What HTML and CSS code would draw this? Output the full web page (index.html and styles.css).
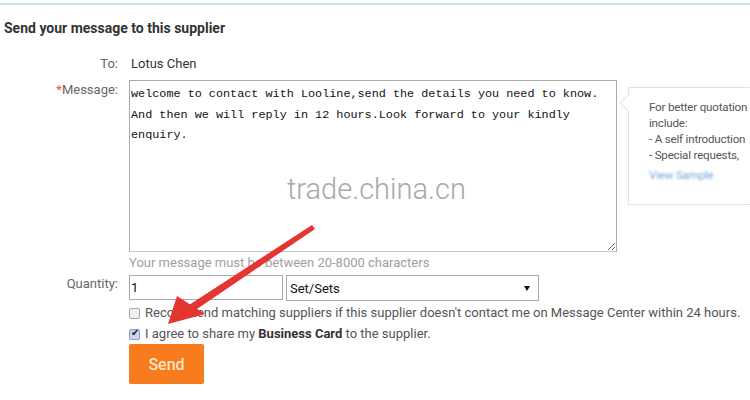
FILE: index.html
```html
<!DOCTYPE html>
<html lang="en">
<head>
    <meta charset="UTF-8">
    <title>Send your message to this supplier</title>
    <link rel="stylesheet" href="styles.css">
</head>
<body>
    <div class="top-line"></div>
    <h2 class="title">Send your message to this supplier</h2>

    <div class="form">
        <div class="row to-row">
            <div class="label">To:</div>
            <div class="field">Lotus Chen</div>
        </div>

        <div class="row msg-row">
            <div class="label"><span class="req">*</span>Message:</div>
            <div class="field">
                <div class="msg-wrap">
                    <textarea class="message" readonly>welcome to contact with Looline,send the details you need to know. And then we will reply in 12 hours.Look forward to your kindly enquiry.</textarea>
                    <div class="tip">
                        <p>For better quotation</p>
                        <p>include:</p>
                        <p>- A self introduction</p>
                        <p>- Special requests,</p>
                        <a class="sample">View Sample</a>
                    </div>
                </div>
                <div class="hint">Your message must be between 20-8000 characters</div>
            </div>
        </div>

        <div class="row qty-row">
            <div class="label">Quantity:</div>
            <div class="field">
                <div class="qty">
                    <input class="qty-input" type="text" value="1">
                    <div class="unit">Set/Sets<span class="caret"></span></div>
                </div>
                <label class="check"><input type="checkbox"><span>Recommend matching suppliers if this supplier doesn't contact me on Message Center within 24 hours.</span></label>
                <label class="check"><input type="checkbox" checked><span>I agree to share my <b>Business Card</b> to the supplier.</span></label>
                <button class="send">Send</button>
            </div>
        </div>
    </div>

    <!-- screenshot overlays: watermark and red arrow -->
    <div class="watermark">trade.china.cn</div>
    <svg class="arrow" width="750" height="400" viewBox="0 0 750 400">
        <polygon points="312,225 315,229 194,311 189,305" fill="#e53530"/>
        <polygon points="168,324 177,296 205,314" fill="#e53530"/>
    </svg>
</body>
</html>
```

FILE: styles.css
```css
body {
    margin: 0;
    background: #fff;
    font-family: Roboto, "Liberation Sans", sans-serif;
    font-size: 13px;
    color: #555;
    overflow: hidden;
    width: 750px;
    height: 400px;
    position: relative;
}
.top-line {
    margin-top: 3px;
    height: 2px;
    background: #cfe2ea;
}
.title {
    margin: 13px 0 0 4px;
    font-size: 14px;
    line-height: 20px;
    font-weight: 700;
    color: #333;
}
.form {
    margin-top: 17px;
}
.row {
    display: grid;
    grid-template-columns: 118px 1fr;
    column-gap: 11px;
}
.label {
    text-align: right;
    color: #666;
    line-height: 18px;
}
.req {
    color: #f05a28;
}
.to-row {
    color: #333;
    line-height: 18px;
}
.to-row .field {
    padding-left: 2px;
}
.msg-row {
    margin-top: 7px;
}
.msg-row .label {
    padding-top: 1px;
}
.msg-wrap {
    display: flex;
    align-items: flex-start;
}
.message {
    width: 488px;
    height: 172px;
    box-sizing: border-box;
    margin: 0;
    padding: 3px 1px;
    border: 1px solid #aaa;
    border-bottom-color: #c8c8c8;
    font-family: "Liberation Mono", monospace;
    font-size: 11.8px;
    line-height: 20.5px;
    color: #111;
    resize: both;
    outline: none;
}
.tip {
    position: relative;
    margin: 7px 0 0 11px;
    width: 123px;
    flex-shrink: 0;
    height: 118px;
    box-sizing: border-box;
    padding: 11px 0 0 20px;
    border: 1px solid #e2e2e2;
    border-right: none;
    font-size: 11.6px;
    line-height: 16px;
    color: #555;
    white-space: nowrap;
    letter-spacing: -0.2px;
    box-shadow: 0 0 8px rgba(0,0,0,0.04);
}
.tip::before {
    content: "";
    position: absolute;
    left: -7px;
    top: 9px;
    width: 11px;
    height: 11px;
    background: #fff;
    border-left: 1px solid #e2e2e2;
    border-bottom: 1px solid #e2e2e2;
    transform: rotate(45deg);
}
.tip p {
    margin: 0;
}
.sample {
    display: block;
    margin-top: 4px;
    color: #7aa7dc;
    filter: blur(1.2px);
}
.hint {
    color: #a0a0a0;
    font-size: 13px;
    line-height: 16px;
    margin-top: 3px;
}
.qty-row {
    margin-top: 4px;
}
.qty {
    display: flex;
    gap: 3px;
}
.qty-input {
    width: 154px;
    height: 25px;
    box-sizing: border-box;
    margin: 0;
    padding: 2px 1px;
    border: 1px solid #aaa;
    font-family: Roboto, "Liberation Sans", sans-serif;
    font-size: 13px;
    color: #111;
}
.unit {
    position: relative;
    width: 253px;
    height: 26px;
    box-sizing: border-box;
    padding: 4px 3px;
    border: 1px solid #aaa;
    color: #111;
    line-height: 17px;
}
.caret {
    position: absolute;
    right: 8px;
    top: 10px;
    border-left: 3px solid transparent;
    border-right: 3px solid transparent;
    border-top: 5px solid #111;
}
.check {
    display: flex;
    align-items: center;
    gap: 5px;
    margin-top: 3px;
    line-height: 18px;
    color: #555;
    white-space: nowrap;
}
.check input {
    appearance: none;
    margin: 0;
    width: 11px;
    height: 11px;
    border: 1px solid #a5a5a5;
    border-radius: 2px;
    background: #f0f0f0;
    position: relative;
}
.check input:checked {
    background: #c9d7ee;
    border-color: #8e9fc0;
}
.check input:checked::after {
    content: "\2714";
    position: absolute;
    left: 1px;
    top: -3px;
    font-size: 10px;
    color: #222;
}
.check b {
    color: #333;
    font-weight: 700;
}
.send {
    margin-top: 1px;
    width: 75px;
    height: 40px;
    border: none;
    border-radius: 2px;
    background: #f87b1e;
    color: #fde4c8;
    font-family: Roboto, "Liberation Sans", sans-serif;
    font-size: 16px;
    font-weight: 500;
}
.watermark {
    position: absolute;
    left: 287px;
    top: 172px;
    font-size: 29px;
    font-weight: 300;
    color: #a8a8a8;
}
.arrow {
    position: absolute;
    left: 0;
    top: 0;
}
```
